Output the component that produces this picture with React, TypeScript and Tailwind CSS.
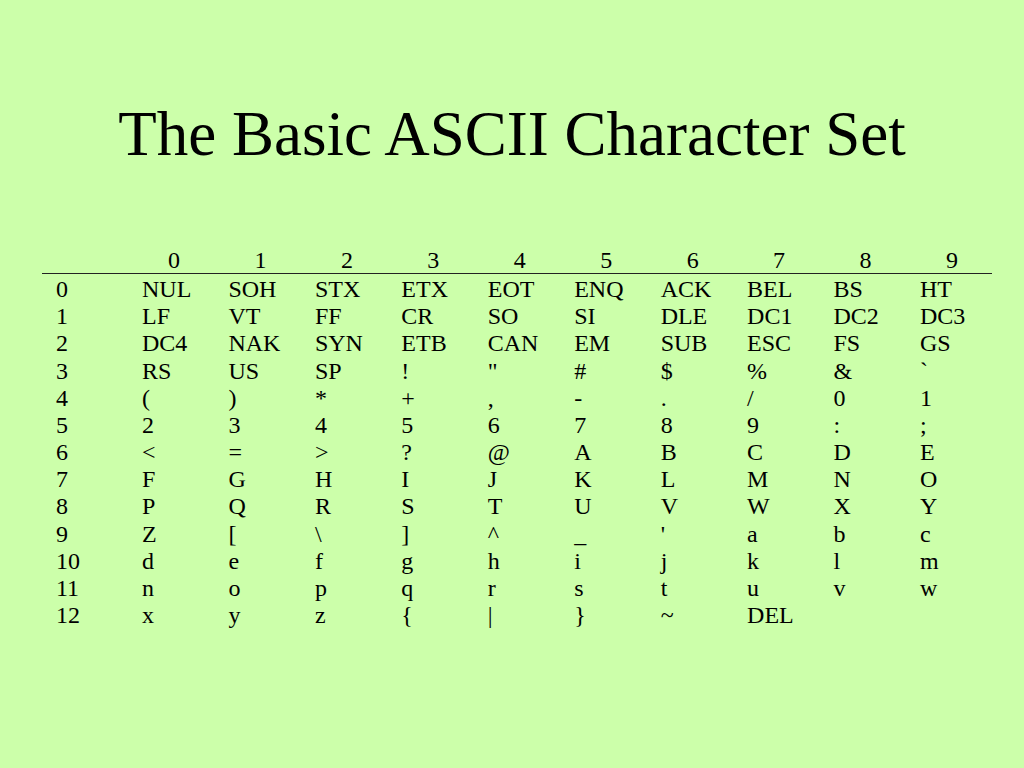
import React from "react";

const rows: string[][] = [
  ["NUL", "SOH", "STX", "ETX", "EOT", "ENQ", "ACK", "BEL", "BS", "HT"],
  ["LF", "VT", "FF", "CR", "SO", "SI", "DLE", "DC1", "DC2", "DC3"],
  ["DC4", "NAK", "SYN", "ETB", "CAN", "EM", "SUB", "ESC", "FS", "GS"],
  ["RS", "US", "SP", "!", "\"", "#", "$", "%", "&", "`"],
  ["(", ")", "*", "+", ",", "-", ".", "/", "0", "1"],
  ["2", "3", "4", "5", "6", "7", "8", "9", ":", ";"],
  ["<", "=", ">", "?", "@", "A", "B", "C", "D", "E"],
  ["F", "G", "H", "I", "J", "K", "L", "M", "N", "O"],
  ["P", "Q", "R", "S", "T", "U", "V", "W", "X", "Y"],
  ["Z", "[", "\\", "]", "^", "_", "'", "a", "b", "c"],
  ["d", "e", "f", "g", "h", "i", "j", "k", "l", "m"],
  ["n", "o", "p", "q", "r", "s", "t", "u", "v", "w"],
  ["x", "y", "z", "{", "|", "}", "~", "DEL", "", ""],
];

const gridCols = "grid grid-cols-[100px_repeat(9,86.44px)_1fr]";

export default function App() {
  return (
    <div
      className="w-[1024px] h-[768px] bg-[#ccffaa] text-black overflow-hidden"
      style={{ fontFamily: '"Liberation Serif", "Times New Roman", serif' }}
    >
      <h1 className="pt-[98px] text-center text-[63px] leading-[72px] font-normal">
        The Basic ASCII Character Set
      </h1>
      <div className="ml-[42px] mt-[77px] w-[950px] text-[24px]">
        <div className={`${gridCols} h-[27px] leading-[26px] border-b border-[#222]`}>
          <div />
          {Array.from({ length: 10 }, (_, i) => (
            <div key={i} className="pl-[26px]">
              {i}
            </div>
          ))}
        </div>
        <div className="pt-[2px]">
          {rows.map((r, ri) => (
            <div key={ri} className={`${gridCols} leading-[27.17px]`}>
              <div className="pl-[14px]">{ri}</div>
              {r.map((c, ci) => (
                <div key={ci} className="whitespace-pre">
                  {c}
                </div>
              ))}
            </div>
          ))}
        </div>
      </div>
    </div>
  );
}
